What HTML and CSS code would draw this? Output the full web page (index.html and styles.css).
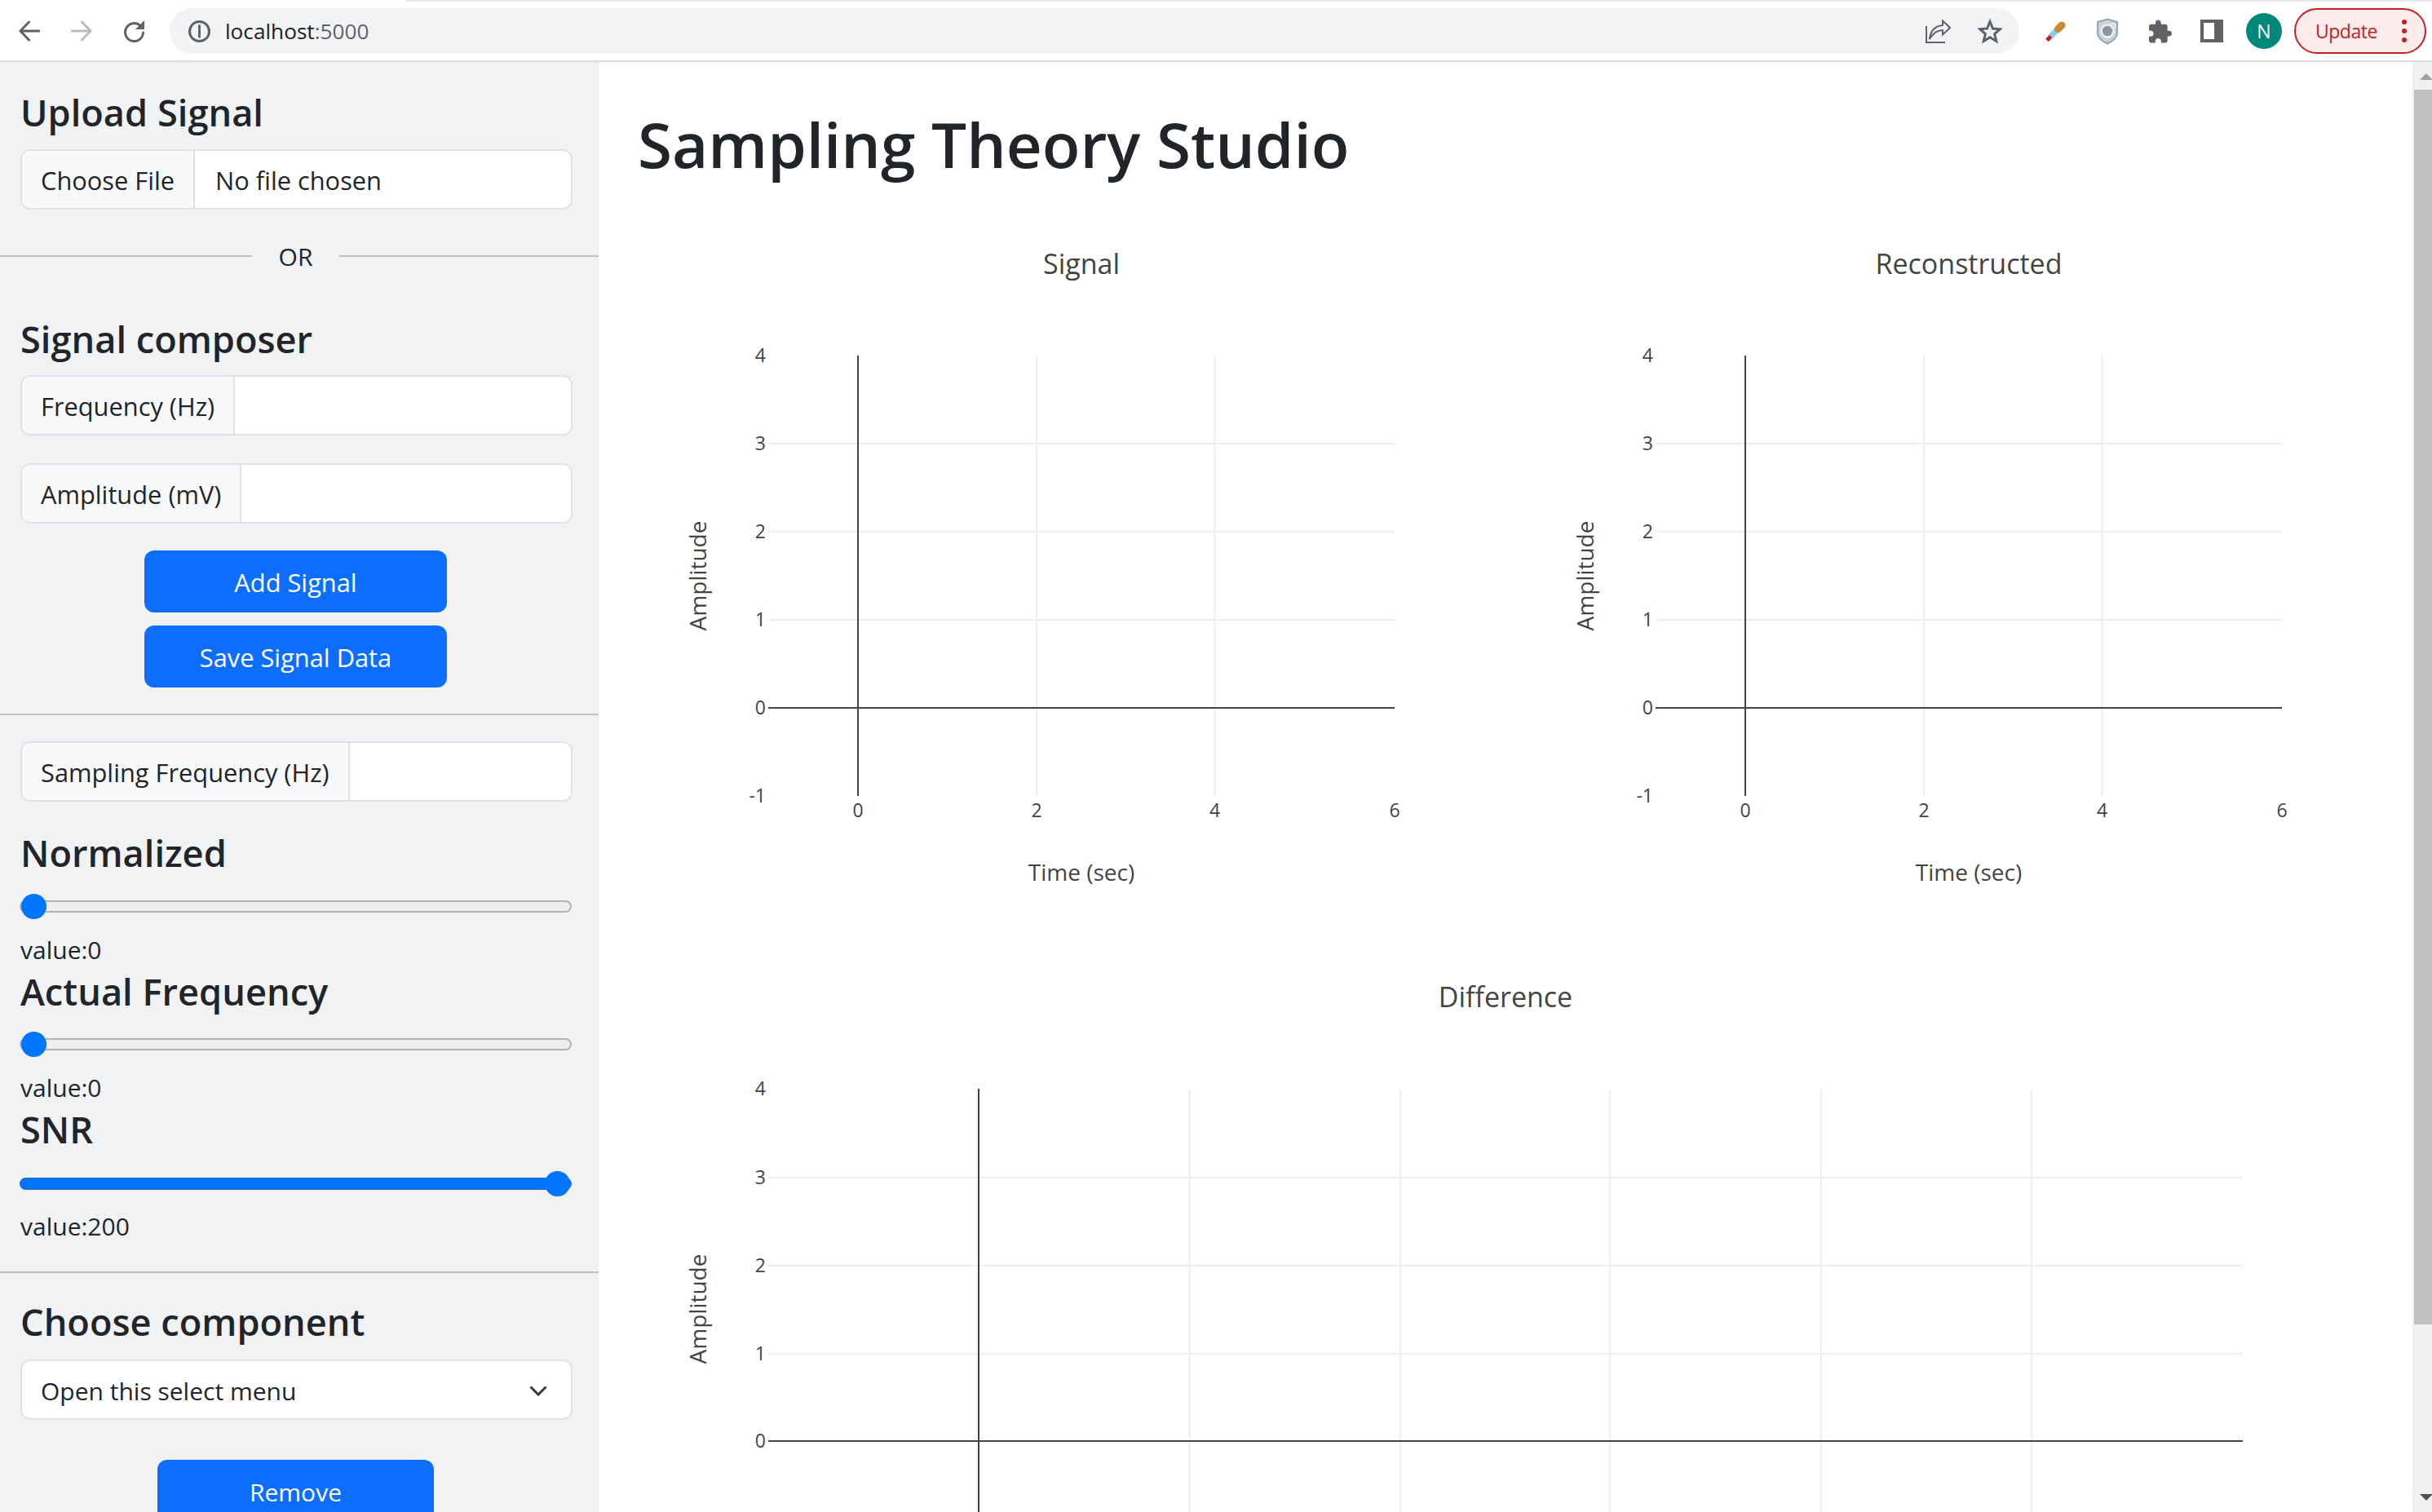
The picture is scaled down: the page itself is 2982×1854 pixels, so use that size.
FILE: index.html
```html
<!DOCTYPE html>
<html lang="en">
<head>
<meta charset="utf-8">
<title>Sampling Theory Studio</title>
<link rel="stylesheet" href="styles.css">
</head>
<body>
<header class="browser">
  <div class="top-strip"></div>
  <div class="toolbar">
    <svg class="ic back" viewBox="0 0 26 26"><path d="M25 13H2M12.500 2 2 13l10.500 11"/></svg>
    <svg class="ic forward" viewBox="0 0 26 26"><path d="M1 13h23M13.500 2 24 13 13.500 24"/></svg>
    <svg class="ic reload" viewBox="0 0 28 28"><path d="M22 7.500A11 11 0 1 0 25.500 16"/><path class="solid" d="M27 1v11H16z"/></svg>
    <div class="omnibox">
      <svg class="ic info" viewBox="0 0 27 27"><circle cx="13.500" cy="13.500" r="12"/><path d="M13.500 12v8"/><path d="M13.500 6.500v3"/></svg>
      <span class="url">localhost<span class="port">:5000</span></span>
      <svg class="ic share" viewBox="0 0 31 29"><path class="thin" d="M1 8v20h23"/><path class="thin" d="M5 24C6 14 12 8 21 7V1.500L30 10l-9 8.500V13C14 13 9 17 5 24Z"/></svg>
      <svg class="ic star" viewBox="0 0 30 30"><path d="M15 3.500 18.500 12l9 .7-6.900 5.900 2.200 8.900L15 22.700 7.200 27.500l2.200-8.900-6.900-5.900 9-.7z"/></svg>
    </div>
    <svg class="ext dropper" viewBox="0 0 25 25"><path stroke="#c5221f" stroke-width="5" d="M2 23.500 8 17"/><path stroke="#8ccbf0" stroke-width="7" d="M6.500 18.500 15 10"/><path stroke="#cd8a35" stroke-width="9" stroke-linecap="round" d="M15.500 9.500 20 5"/></svg>
    <svg class="ext shield" viewBox="0 0 26 33"><path fill="#ccd1d5" stroke="#8fa6b8" stroke-width="2" d="M13 1.500 25 5v13c0 6.500-5.500 10.500-12 13.500C6.500 28.500 1 24.500 1 18V5z"/><circle cx="13" cy="16" r="7.500" fill="#8d959c" stroke="#eef0f1" stroke-width="2.500"/><circle cx="20" cy="9.500" r="2.500" fill="#ccd1d5" stroke="#eef0f1" stroke-width="1.500"/></svg>
    <svg class="ext puzzle" viewBox="2 1 21 21"><path fill="#5f6368" d="M20.500 11H19V7c0-1.100-.9-2-2-2h-4V3.500C13 2.120 11.880 1 10.500 1S8 2.120 8 3.500V5H4c-1.100 0-1.990.9-1.990 2v3.800H3.500c1.490 0 2.700 1.210 2.700 2.700s-1.210 2.700-2.700 2.700H2V20c0 1.100.9 2 2 2h3.800v-1.500c0-1.490 1.210-2.700 2.700-2.700 1.490 0 2.700 1.210 2.700 2.700V22H17c1.100 0 2-.9 2-2v-4h1.500c1.380 0 2.500-1.120 2.500-2.500S21.880 11 20.500 11z"/></svg>
    <div class="panel-icon"><div class="panel-hole"></div></div>
    <div class="avatar">N</div>
    <div class="update">
      <span>Update</span>
      <div class="dots"><i></i><i></i><i></i></div>
    </div>
  </div>
</header>

<div class="page">
  <aside class="sidebar">
    <h3 class="heading first">Upload Signal</h3>
    <div class="group file"><span class="addon">Choose File</span><span class="file-name">No file chosen</span></div>
    <div class="or"><span>OR</span></div>
    <h3 class="heading composer">Signal composer</h3>
    <div class="group freq"><span class="addon">Frequency (Hz)</span><input class="field" type="text"></div>
    <div class="group amp"><span class="addon">Amplitude (mV)</span><input class="field" type="text"></div>
    <button class="btn add">Add Signal</button>
    <button class="btn save">Save Signal Data</button>
    <hr class="rule rule-a">
    <div class="group sampling"><span class="addon">Sampling Frequency (Hz)</span><input class="field" type="text"></div>
    <h3 class="heading norm">Normalized</h3>
    <input class="slider s-norm" type="range" min="0" max="100" value="0">
    <p class="value">value:0</p>
    <h3 class="heading tight">Actual Frequency</h3>
    <input class="slider s-act" type="range" min="0" max="100" value="0">
    <p class="value">value:0</p>
    <h3 class="heading tight">SNR</h3>
    <input class="slider full s-snr" type="range" min="0" max="200" value="200">
    <p class="value v-snr">value:200</p>
    <hr class="rule rule-b">
    <h3 class="heading choose">Choose component</h3>
    <div class="select"><span>Open this select menu</span><svg class="chevron" viewBox="0 0 22 13"><path d="M1.500 1.500 11 11l9.500-9.500"/></svg></div>
    <button class="btn remove">Remove</button>
  </aside>

  <main class="content">
    <h1 class="title">Sampling Theory Studio</h1>
    <div class="charts">
      <svg class="chart" viewBox="0 0 1088 899">
        <text class="c-title" x="544" y="66">Signal</text>
        <path class="grid" d="M160 274H928M160 382H928M160 490H928M489 166V706M707.500 166V706"/>
        <path class="axis" d="M160 598H928M270 166V706"/>
        <text class="tick-y" x="157" y="174">4</text><text class="tick-y" x="157" y="282">3</text><text class="tick-y" x="157" y="390">2</text><text class="tick-y" x="157" y="498">1</text><text class="tick-y" x="157" y="606">0</text><text class="tick-y" x="157" y="714">-1</text>
        <text class="tick-x" x="270" y="732">0</text><text class="tick-x" x="489" y="732">2</text><text class="tick-x" x="707.500" y="732">4</text><text class="tick-x" x="928" y="732">6</text>
        <text class="a-title" x="544" y="810">Time (sec)</text>
        <text class="a-title" transform="translate(84 436) rotate(-90)">Amplitude</text>
      </svg>
      <svg class="chart" viewBox="0 0 1088 899">
        <text class="c-title" x="544" y="66">Reconstructed</text>
        <path class="grid" d="M160 274H928M160 382H928M160 490H928M489 166V706M707.500 166V706"/>
        <path class="axis" d="M160 598H928M270 166V706"/>
        <text class="tick-y" x="157" y="174">4</text><text class="tick-y" x="157" y="282">3</text><text class="tick-y" x="157" y="390">2</text><text class="tick-y" x="157" y="498">1</text><text class="tick-y" x="157" y="606">0</text><text class="tick-y" x="157" y="714">-1</text>
        <text class="tick-x" x="270" y="732">0</text><text class="tick-x" x="489" y="732">2</text><text class="tick-x" x="707.500" y="732">4</text><text class="tick-x" x="928" y="732">6</text>
        <text class="a-title" x="544" y="810">Time (sec)</text>
        <text class="a-title" transform="translate(84 436) rotate(-90)">Amplitude</text>
      </svg>
      <svg class="chart wide" viewBox="0 0 2128 720">
        <text class="c-title" x="1064" y="66">Difference</text>
        <path class="grid" d="M160 275H1968M160 383H1968M160 491H1968M676.500 166V720M935 166V720M1192 166V720M1451 166V720M1709 166V720"/>
        <path class="axis" d="M160 598H1968M418 166V720"/>
        <text class="tick-y" x="157" y="174">4</text><text class="tick-y" x="157" y="283">3</text><text class="tick-y" x="157" y="391">2</text><text class="tick-y" x="157" y="499">1</text><text class="tick-y" x="157" y="606">0</text>
        <text class="a-title" transform="translate(84 436) rotate(-90)">Amplitude</text>
      </svg>
    </div>
  </main>

  <div class="scrollbar">
    <div class="arrow-up"></div>
    <div class="thumb"></div>
    <div class="arrow-down"></div>
  </div>
</div>
</body>
</html>
```

FILE: styles.css
```css
* { box-sizing: border-box; }
html, body { margin: 0; height: 1854px; overflow: hidden; background: #fff; }
body {
  width: 2982px;
  font-family: "Open Sans", "Noto Sans", sans-serif;
  color: #212529;
  display: flex;
  flex-direction: column;
}

/* Browser chrome */
.browser { height: 76px; flex: none; background: #fff; border-bottom: 2px solid #dcdddf; }
.top-strip { height: 2px; margin-left: 497px; background: #e6e7e9; }
.toolbar { height: 72px; display: flex; align-items: center; padding-left: 23px; }
.ic { flex: none; fill: none; stroke: #5f6368; stroke-width: 3; stroke-linecap: round; }
.ic .solid { fill: #5f6368; stroke: none; }
.ic .thin { stroke-width: 2; stroke-linecap: butt; }
.back { width: 26px; height: 26px; }
.forward { width: 26px; height: 26px; margin-left: 38px; stroke: #babcbf; }
.reload { width: 28px; height: 28px; margin-left: 37px; }
.omnibox {
  width: 2268px; height: 56px; margin-left: 30px; padding: 0 21px 0 23px;
  display: flex; align-items: center;
  background: #f1f3f4; border-radius: 28px;
}
.info { width: 27px; height: 27px; }
.url { margin-left: 18px; font-size: 26.200px; color: #202124; white-space: nowrap; }
.port { color: #5f6368; }
.share { width: 31px; height: 29px; margin-left: auto; }
.star { width: 30px; height: 30px; margin-left: 33px; stroke-width: 3; stroke-linecap: butt; }
.ext { flex: none; fill: none; }
.dropper { width: 25px; height: 25px; margin-left: 32px; }
.shield { width: 26px; height: 33px; margin-left: 38px; }
.puzzle { width: 28px; height: 29px; margin-left: 38px; }
.panel-icon { width: 28px; height: 28px; margin-left: 35px; padding: 4px 11px 4px 4px; background: #5f6368; }
.panel-hole { height: 100%; background: #fff; }
.avatar {
  width: 44px; height: 44px; margin-left: 28px; border-radius: 50%;
  background: #00897b; color: #fff; font-size: 23px;
  display: flex; align-items: center; justify-content: center;
}
.update {
  width: 162px; height: 56px; margin-left: 15px; padding: 0 22px 0 24px;
  border: 2px solid #c5221f; border-radius: 28px; background: #fbeceb;
  color: #c5221f; font-size: 23px; letter-spacing: -0.5px;
  display: flex; align-items: center; justify-content: space-between;
}
.dots { display: flex; flex-direction: column; gap: 5px; }
.dots i { display: block; width: 6px; height: 6px; border-radius: 50%; background: #c5221f; }

/* Page */
.page { flex: 1; min-height: 0; display: flex; }
.sidebar {
  width: 734px; flex: none; overflow: hidden;
  display: flex; flex-direction: column;
  padding: 33px 32px 0 25px;
  background: #f1f2f4;
}
.heading { margin: 0; font-size: 45.200px; line-height: 58px; font-weight: 600; white-space: nowrap; }
.composer { margin-top: 53px; }
.norm { margin-top: 34px; }
.tight { margin-top: 2px; }
.choose { margin-top: 31px; }

.group {
  display: flex; height: 74px; width: 677px; flex: none;
  border: 2px solid #dfe2e7; border-radius: 12px; overflow: hidden;
  font-size: 30.800px; background: #fff;
}
.file { margin-top: 16px; }
.freq { margin-top: 15px; }
.amp { margin-top: 34px; }
.sampling { margin-top: 32px; }
.addon {
  display: flex; align-items: center; padding: 2px 23px 0 23px; white-space: nowrap;
  background: #f8f9fa; border-right: 2px solid #dfe2e7;
}
.file-name { display: flex; align-items: center; padding: 2px 0 0 25px; }
.field { flex: 1; min-width: 0; border: 0; background: #fff; outline: 0; }

.or {
  height: 40px; margin: 37px -32px 0 -25px; flex: none;
  display: flex; align-items: center; font-size: 30px;
}
.or::before, .or::after { content: ""; height: 2px; background: #bfc0c2; flex: 1; }
.or::before { flex: 0 0 309px; }
.or span { width: 107px; text-align: center; }

.btn {
  display: block; flex: none; height: 76px; width: 371px; margin: 0 0 0 152px;
  padding: 2px 0 0; border: 0; border-radius: 12px;
  background: #0d6efd; color: #fff;
  font: 400 30px "Open Sans", "Noto Sans", sans-serif;
}
.add { margin-top: 33px; font-size: 30.800px; }
.save { margin-top: 16px; font-size: 30.800px; }
.remove { margin-top: 49px; margin-left: 168px; width: 339px; }

.rule { height: 2px; margin: 0 -32px 0 -25px; border: 0; background: #bfc0c2; flex: none; }
.rule-a { margin-top: 32px; }
.rule-b { margin-top: 35px; }

.slider {
  display: block; flex: none; width: 677px; height: 31px; margin: 21px 0 0 -1px; padding: 0;
  appearance: none; -webkit-appearance: none; background: transparent;
}
.s-act { margin-top: 20px; }
.s-snr { margin-top: 22px; }
.slider::-webkit-slider-runnable-track {
  height: 15px; border: 2px solid #b2b2b2; border-radius: 8px; background: #efefef;
}
.slider::-webkit-slider-thumb {
  -webkit-appearance: none; width: 31px; height: 31px; margin-top: -10px;
  border-radius: 50%; background: #0075ff;
}
.slider.full::-webkit-slider-runnable-track { background: #0075ff; border-color: #1a6fd8; }
.value { margin: 18px 0 0; font-size: 30px; line-height: 40px; }
.v-snr { margin-top: 17px; }

.select {
  flex: none; width: 677px; height: 74px; margin-top: 17px; padding: 2px 29px 0 23px;
  display: flex; align-items: center; justify-content: space-between;
  background: #fff; border: 2px solid #dfe2e7; border-radius: 12px;
  font-size: 30px;
}
.chevron { width: 22px; height: 13px; fill: none; stroke: #343a40; stroke-width: 3; }

/* Charts */
.content { flex: 1; min-width: 0; overflow: hidden; padding: 53px 0 0 48px; background: #fff; }
.title { margin: 0; font-size: 76.400px; line-height: 94px; font-weight: 600; white-space: nowrap; }
.charts { margin-top: 47px; display: grid; grid-template-columns: 1088px 1088px; }
.chart { display: block; width: 1088px; height: 899px; }
.chart.wide { grid-column: 1 / 3; width: 2128px; height: 720px; }
.chart text { font-family: "Open Sans", sans-serif; fill: #444; }
.grid { stroke: #eee; stroke-width: 2; fill: none; }
.axis { stroke: #444; stroke-width: 2; fill: none; }
.c-title { font-size: 34px; text-anchor: middle; }
.a-title { font-size: 28px; text-anchor: middle; }
.tick-y { font-size: 23px; text-anchor: end; }
.tick-x { font-size: 23px; text-anchor: middle; }

/* Scrollbar */
.scrollbar { width: 24px; flex: none; background: #f1f1f1; padding: 14px 0 0 2px; display: flex; flex-direction: column; }
.arrow-up, .arrow-down { width: 0; height: 0; margin-left: 7px; border-left: 8px solid transparent; border-right: 8px solid transparent; }
.arrow-up { border-bottom: 8px solid #a3a0a5; }
.thumb { height: 1514px; margin-top: 12px; background: #c1c1c1; }
.arrow-down { margin-top: 208px; border-top: 8px solid #505050; }
```
